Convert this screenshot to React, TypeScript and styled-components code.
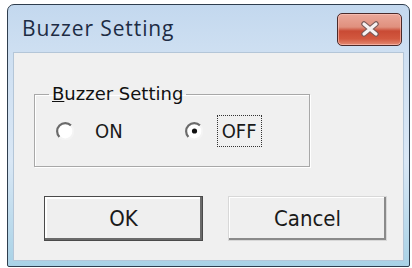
import React from "react";
import styled, { createGlobalStyle } from "styled-components";

const Global = createGlobalStyle`
  html, body { margin: 0; padding: 0; background: #ffffff; }
  body { width: 412px; height: 268px; overflow: hidden; }
`;

const Page = styled.div`
  padding: 4px 2px 1px 7px;
  height: 268px;
  box-sizing: border-box;
`;

const Window = styled.div`
  height: 100%;
  box-sizing: border-box;
  border: 1.5px solid #2f3e4e;
  border-radius: 7px 7px 2px 2px;
  background: linear-gradient(180deg, #c3d8ee 0%, #cfe0f2 20%, #d9e7f5 60%, #a9d2e6 100%);
  display: flex;
  flex-direction: column;
`;

const TitleBar = styled.div`
  height: 47px;
  display: flex;
  align-items: center;
  justify-content: space-between;
  padding: 0 7px 2px 14px;
  box-sizing: border-box;
`;

const Title = styled.div`
  font-family: "Open Sans", "Noto Sans", sans-serif;
  font-size: 21px;
  color: #1d2c44;
  letter-spacing: 0.9px;
`;

const CloseButton = styled.div`
  width: 65px;
  height: 33px;
  margin-top: 3px;
  box-sizing: border-box;
  border: 1.5px solid #4a2a2a;
  border-radius: 5px;
  background: linear-gradient(180deg, #eaa89a 0%, #e0907e 42%, #c94a34 55%, #d2583f 80%, #e38a72 100%);
  box-shadow: inset 0 0 0 1px rgba(255, 200, 190, 0.6);
  display: flex;
  align-items: center;
  justify-content: center;
`;

const Client = styled.div`
  flex: 1;
  margin: 0 5px 5px 5px;
  background: #f0f0f0;
  border: 1px solid #b4c6d8;
  display: flex;
  flex-direction: column;
`;

const GroupBox = styled.fieldset`
  margin: 31px 0 0 20px;
  width: 276px;
  height: 83px;
  box-sizing: border-box;
  border: 1px solid #a8a8a8;
  box-shadow: 1px 1px 0 #ffffff, inset 1px 1px 0 #ffffff;
  padding: 0 0 0 14px;
`;

const Legend = styled.legend`
  font-family: "DejaVu Sans", Verdana, sans-serif;
  font-size: 18px;
  color: #111111;
  padding: 0 3px;
  line-height: 20px;
`;

const Underline = styled.span`
  text-decoration: underline;
`;

const RadioRow = styled.div`
  display: flex;
  align-items: center;
  margin-top: 12px;
  margin-left: 7px;
`;

const RadioOption = styled.label<{ $gap: number }>`
  display: flex;
  align-items: center;
  margin-right: ${(p) => p.$gap}px;
  font-family: "DejaVu Sans Condensed", "DejaVu Sans", sans-serif;
  font-stretch: condensed;
  font-size: 20px;
  color: #1a1a1a;
`;

const RadioMark = styled.span`
  width: 18px;
  height: 18px;
  margin-right: 17px;
  display: inline-flex;
`;

const LabelText = styled.span<{ $focused?: boolean }>`
  padding: 4px 4px;
  margin-left: ${(p) => (p.$focused ? -2 : 0)}px;
  outline: ${(p) => (p.$focused ? "1.5px dotted #333" : "none")};
  line-height: 22px;
`;

const ButtonRow = styled.div`
  display: flex;
  gap: 25px;
  margin: 29px 0 0 30px;
`;

const Button = styled.div<{ $default?: boolean }>`
  width: 159px;
  height: 45px;
  box-sizing: border-box;
  background: #efefef;
  border: 1px solid ${(p) => (p.$default ? "#4a4a4a" : "#d8d8d8")};
  box-shadow: ${(p) =>
    p.$default
      ? "inset -2px -2px 0 #6a6a6a, inset 2px 2px 0 #ffffff"
      : "inset -2px -2px 0 #8a8a8a, inset 1px 1px 0 #ffffff"};
  display: flex;
  align-items: center;
  justify-content: center;
  font-family: "DejaVu Sans Condensed", "DejaVu Sans", sans-serif;
  font-stretch: condensed;
  font-size: 22px;
  color: #1a1a1a;
`;

const Radio = ({ checked }: { checked?: boolean }) => (
  <RadioMark>
    <svg width="18" height="18" viewBox="0 0 18 18">
      <circle cx="9" cy="9" r="8" fill="#ffffff" />
      <path d="M15 3.5 A8 8 0 1 0 3.5 15" fill="none" stroke="#6a6a6a" strokeWidth="2.2" />
      <path d="M3.5 15 A8 8 0 0 0 15 3.5" fill="none" stroke="#f4f4f4" strokeWidth="2" />
      {checked && <circle cx="9.5" cy="9" r="2.6" fill="#111" />}
    </svg>
  </RadioMark>
);

const CloseX = () => (
  <svg width="20" height="16" viewBox="0 0 20 16">
    <path d="M4 3 L16 13 M16 3 L4 13" stroke="#7a5a58" strokeWidth="5.5" strokeLinecap="round" />
    <path d="M4 3 L16 13 M16 3 L4 13" stroke="#f6f2f2" strokeWidth="3.2" strokeLinecap="round" />
  </svg>
);

export default function App() {
  return (
    <>
      <Global />
      <Page>
        <Window>
          <TitleBar>
            <Title>Buzzer Setting</Title>
            <CloseButton>
              <CloseX />
            </CloseButton>
          </TitleBar>
          <Client>
            <GroupBox>
              <Legend>
                <Underline>B</Underline>uzzer Setting
              </Legend>
              <RadioRow>
                <RadioOption $gap={58}>
                  <Radio />
                  <LabelText>ON</LabelText>
                </RadioOption>
                <RadioOption $gap={0}>
                  <Radio checked />
                  <LabelText $focused>OFF</LabelText>
                </RadioOption>
              </RadioRow>
            </GroupBox>
            <ButtonRow>
              <Button $default>OK</Button>
              <Button>Cancel</Button>
            </ButtonRow>
          </Client>
        </Window>
      </Page>
    </>
  );
}
